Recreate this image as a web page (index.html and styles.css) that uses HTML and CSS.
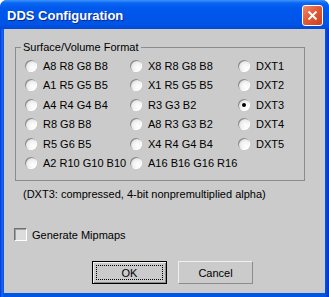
FILE: index.html
```html
<!DOCTYPE html>
<html lang="en">
    <head>
        <meta charset="UTF-8" />
        <title>DDS Configuration</title>
        <link rel="stylesheet" href="styles.css">
    </head>
    <body>
        <div class="window">
            <div class="titlebar">
                <span class="title">DDS Configuration</span>
                <span class="close">
                    <svg width="13" height="13" viewBox="0 0 13 13">
                        <path d="M2.5 2.5 L10.5 10.5 M10.5 2.5 L2.5 10.5" stroke="#fff" stroke-width="2" />
                    </svg>
                </span>
            </div>

            <div class="client">
                <fieldset class="group">
                    <legend>Surface/Volume Format</legend>
                    <div class="options">
                        <label class="opt"><span class="radio"></span>A8 R8 G8 B8</label>
                        <label class="opt"><span class="radio"></span>X8 R8 G8 B8</label>
                        <label class="opt"><span class="radio"></span>DXT1</label>

                        <label class="opt"><span class="radio"></span>A1 R5 G5 B5</label>
                        <label class="opt"><span class="radio"></span>X1 R5 G5 B5</label>
                        <label class="opt"><span class="radio"></span>DXT2</label>

                        <label class="opt"><span class="radio"></span>A4 R4 G4 B4</label>
                        <label class="opt"><span class="radio"></span>R3 G3 B2</label>
                        <label class="opt"><span class="radio checked"></span>DXT3</label>

                        <label class="opt"><span class="radio"></span>R8 G8 B8</label>
                        <label class="opt"><span class="radio"></span>A8 R3 G3 B2</label>
                        <label class="opt"><span class="radio"></span>DXT4</label>

                        <label class="opt"><span class="radio"></span>R5 G6 B5</label>
                        <label class="opt"><span class="radio"></span>X4 R4 G4 B4</label>
                        <label class="opt"><span class="radio"></span>DXT5</label>

                        <label class="opt"><span class="radio"></span>A2 R10 G10 B10</label>
                        <label class="opt"><span class="radio"></span>A16 B16 G16 R16</label>
                    </div>
                </fieldset>

                <p class="status">(DXT3: compressed, 4-bit nonpremultiplied alpha)</p>

                <label class="check-row"><span class="checkbox"></span>Generate Mipmaps</label>

                <div class="buttons">
                    <button class="btn default"><span class="focus">OK</span></button>
                    <button class="btn">Cancel</button>
                </div>
            </div>
        </div>
    </body>
</html>
```

FILE: styles.css
```css
html,
body {
    margin: 0;
    background: #ffffff;
}

body {
    font-family: 'Liberation Sans', Arial, sans-serif;
    font-size: 11px;
    color: #000;
}

.window {
    width: 329px;
    height: 297px;
    box-sizing: border-box;
    display: flex;
    flex-direction: column;
    background: linear-gradient(90deg, #0831d9 0, #166aee 2px, #0055e5 4px, #0055e5 325px, #0742c9 327px, #0831d9 329px);
    border-radius: 7px 7px 0 0;
    overflow: hidden;
}

.titlebar {
    height: 29px;
    flex: none;
    display: flex;
    align-items: center;
    justify-content: space-between;
    padding: 0 6px 0 7px;
    background: linear-gradient(#3d95ff 0, #0a66f0 3px, #0058ee 8px, #0054e6 24px, #004ad8 29px);
    box-sizing: border-box;
}

.title {
    font-family: 'Liberation Sans', Arial, sans-serif;
    font-weight: bold;
    font-size: 13px;
    color: #fff;
    text-shadow: 1px 1px 0 #0a2a8a;
    padding-top: 1px;
}

.close {
    width: 19px;
    height: 19px;
    border: 1px solid #fff;
    border-radius: 3px;
    background: linear-gradient(135deg, #f08a6c, #e35a35 45%, #c84020);
    display: flex;
    align-items: center;
    justify-content: center;
    margin-top: 1px;
}

.client {
    flex: 1;
    margin: 0 4px 4px 4px;
    background: #cbcbcb;
    padding: 12px 20px 0 11px;
    display: flex;
    flex-direction: column;
}

.group {
    margin: 0;
    padding: 2px 0 7px 9px;
    border: 1px solid #8c8c8c;
    min-width: 0;
}

.group legend {
    padding: 0 2px;
    margin-left: -4px;
    line-height: 13px;
}

.options {
    display: grid;
    grid-template-columns: 105px 108px 1fr;
    grid-auto-rows: 19.5px;
}

.opt {
    display: flex;
    align-items: center;
    white-space: nowrap;
}

.radio {
    position: relative;
    width: 12px;
    height: 12px;
    margin-right: 6px;
    border-radius: 50%;
    flex: none;
    background: radial-gradient(circle at 65% 65%, #ffffff 0, #f2f2f2 40%, #d6d6d6 80%);
    box-shadow: inset 1px 1px 0 #8a8a8a, inset -1px -1px 0 #ffffff;
}

.radio.checked::after {
    content: '';
    position: absolute;
    left: 4px;
    top: 4px;
    width: 4px;
    height: 4px;
    border-radius: 50%;
    background: #000;
}

.status {
    margin: 7px 0 0 8px;
    line-height: 13px;
}

.check-row {
    display: flex;
    align-items: center;
    margin: 27px 0 0 -1px;
}

.checkbox {
    width: 11px;
    height: 11px;
    margin-right: 5px;
    background: #dcdcdc;
    border: 1px solid;
    border-color: #707070 #ffffff #ffffff #707070;
    box-shadow: inset 1px 1px 0 #a0a0a0;
}

.buttons {
    display: flex;
    gap: 11px;
    margin: 20px 0 0 77px;
}

.btn {
    width: 75px;
    height: 23px;
    padding: 0;
    font-family: 'Liberation Sans', Arial, sans-serif;
    font-size: 11px;
    color: #000;
    background: #cbcbcb;
    border: 1px solid;
    border-color: #f0f0f0 #8c8c8c #8c8c8c #f0f0f0;
}

.btn.default {
    border: 1px solid #000;
    box-shadow: inset 1px 1px 0 #f0f0f0, inset -1px -1px 0 #8c8c8c;
    display: flex;
    padding: 3px;
}

.focus {
    flex: 1;
    display: flex;
    align-items: center;
    justify-content: center;
    border: 1px dotted #000;
}
```
